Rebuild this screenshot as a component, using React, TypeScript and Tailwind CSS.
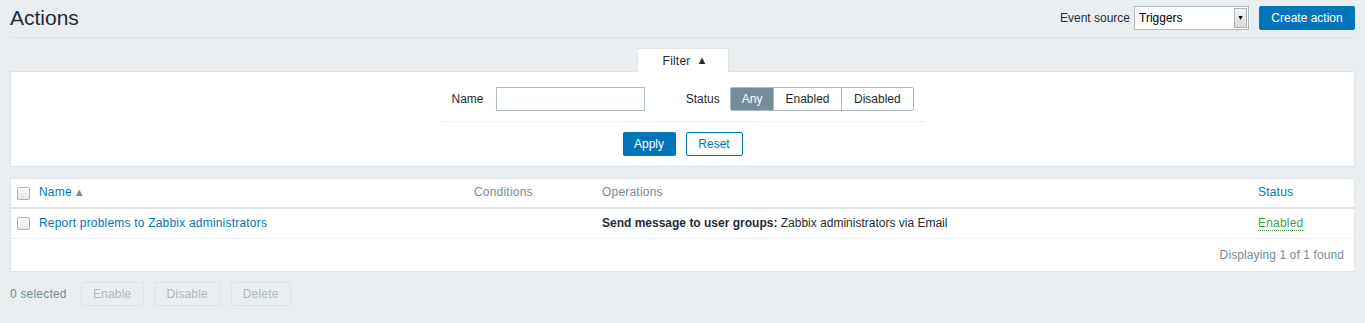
import React from "react";

const font = { fontFamily: '"Liberation Sans", Arial, sans-serif' };

function Checkbox() {
  return (
    <span className="inline-block w-[13px] h-[13px] rounded-[2px] border border-[#a9b5bc] bg-gradient-to-b from-[#fdfdfd] to-[#e4e7ea] align-middle" />
  );
}

export default function App() {
  return (
    <div style={font} className="min-h-[323px] bg-[#ebeef0] px-[10px] text-[12px] text-[#1f2c33] leading-[14px]">
      {/* Header */}
      <div className="flex items-center justify-between pt-[6px] pb-[7px] border-b border-[#dfe4e7]">
        <h1 className="text-[21px] leading-[24px] font-normal text-[#1f2c33]">Actions</h1>
        <div className="flex items-center">
          <span className="mr-[4px]">Event source</span>
          <div className="flex items-center h-[24px] w-[115px] border border-[#acbbc2] bg-white">
            <span className="flex-1 pl-[4px] text-[12px] text-black">Triggers</span>
            <span className="flex items-center justify-center w-[13px] h-[20px] mr-[1px] bg-gradient-to-b from-[#f6f6f6] to-[#d8d8d8] border border-[#b4b4b4] text-[7px] text-black">▼</span>
          </div>
          <button className="ml-[10px] h-[24px] w-[96px] bg-[#0275b8] text-white text-[12px] rounded-[2px]">Create action</button>
        </div>
      </div>

      {/* Filter tab */}
      <div className="mt-[10px] flex justify-center">
        <div className="relative z-10 -mb-px w-[92px] h-[24px] pl-[5px] border border-b-0 border-[#dfe4e7] bg-white flex items-center justify-center">
          <span className="tracking-[0.2px]">Filter</span>
          <span className="ml-[6px] text-[11px] leading-[11px]">▲</span>
        </div>
      </div>
      <div className="bg-white border border-[#dfe4e7] pt-[15px] pb-[10px]">
        <div className="w-[484px] mx-auto">
          <div className="flex items-center px-[11px] h-[24px]">
            <span className="w-[45px]">Name</span>
            <div className="w-[150px] h-[24px] border border-[#acbbc2] bg-white" />
            <span className="ml-[41px] w-[45px]">Status</span>
            <div className="flex h-[24px] border border-[#acbbc2] rounded-[2px] overflow-hidden">
              <span className="w-[42px] bg-[#768d99] text-white flex items-center justify-center">Any</span>
              <span className="w-[69px] border-l border-[#acbbc2] flex items-center justify-center">Enabled</span>
              <span className="w-[72px] border-l border-[#acbbc2] flex items-center justify-center">Disabled</span>
            </div>
          </div>
          <div className="mt-[10px] border-t border-[#ebeef0]" />
          <div className="mt-[10px] flex justify-center gap-[10px]">
            <button className="h-[24px] w-[53px] bg-[#0275b8] text-white rounded-[2px]">Apply</button>
            <button className="h-[24px] w-[57px] border border-[#0275b8] text-[#0275b8] bg-white rounded-[2px]">Reset</button>
          </div>
        </div>
      </div>

      {/* Table */}
      <div className="mt-[11px] bg-white border border-[#dfe4e7]">
        <table className="w-full table-fixed border-collapse">
          <colgroup>
            <col className="w-[23px]" />
            <col className="w-[435px]" />
            <col className="w-[128px]" />
            <col />
            <col className="w-[101px]" />
          </colgroup>
          <thead>
            <tr className="border-b-2 border-[#dfe4e7] h-[29px]">
              <th className="pl-[6px] text-left font-normal"><Checkbox /></th>
              <th className="px-[5px] pb-[2px] text-left font-normal text-[#0275b8] tracking-[0.2px]">
                Name<span className="ml-[2px] text-[11px] text-[#768d99]">▲</span>
              </th>
              <th className="px-[5px] pb-[2px] text-left font-normal text-[#768d99] tracking-[0.2px]">Conditions</th>
              <th className="px-[5px] pb-[2px] text-left font-normal text-[#768d99] tracking-[0.2px]">Operations</th>
              <th className="px-[5px] pb-[2px] text-left font-normal text-[#0275b8] tracking-[0.2px]">Status</th>
            </tr>
          </thead>
          <tbody>
            <tr className="border-b border-[#ebeef0] h-[30px]">
              <td className="pl-[6px]"><Checkbox /></td>
              <td className="px-[5px] text-[#0275b8] tracking-[0.2px]">Report problems to Zabbix administrators</td>
              <td className="px-[5px]"></td>
              <td className="px-[5px]"><b>Send message to user groups:</b> Zabbix administrators via Email</td>
              <td className="px-[5px]">
                <span className="text-[#429e47] border-b border-dotted border-[#429e47] tracking-[0.2px]">Enabled</span>
              </td>
            </tr>
          </tbody>
        </table>
        <div className="h-[32px] flex items-center justify-end pr-[10px] text-[#768d99] tracking-[0.1px]">Displaying 1 of 1 found</div>
      </div>

      {/* Action bar */}
      <div className="mt-[10px] flex items-center h-[24px]">
        <span className="text-[#768d99] mr-[14px] tracking-[0.2px]">0 selected</span>
        <div className="flex gap-[10px] tracking-[0.2px]">
          <button className="h-[24px] w-[63px] border border-[#dfe4e7] bg-[#ebeef0] text-[#acbbc2] rounded-[2px]">Enable</button>
          <button className="h-[24px] w-[67px] border border-[#dfe4e7] bg-[#ebeef0] text-[#acbbc2] rounded-[2px]">Disable</button>
          <button className="h-[24px] w-[60px] border border-[#dfe4e7] bg-[#ebeef0] text-[#acbbc2] rounded-[2px]">Delete</button>
        </div>
      </div>
    </div>
  );
}
